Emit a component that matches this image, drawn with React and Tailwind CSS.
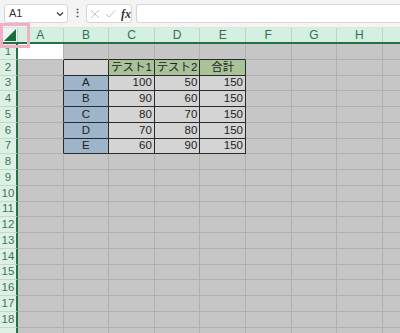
const cols = ['A', 'B', 'C', 'D', 'E', 'F', 'G', 'H'];
const rows = Array.from({ length: 19 }, (_, i) => i + 1);

const data = {
  2: ['', 'テスト1', 'テスト2', '合計'],
  3: ['A', '100', '50', '150'],
  4: ['B', '90', '60', '150'],
  5: ['C', '80', '70', '150'],
  6: ['D', '70', '80', '150'],
  7: ['E', '60', '90', '150'],
};

// table occupies B2:E7 -> col index 1..4, rows 2..7
const inTable = (r, c) => r >= 2 && r <= 7 && c >= 1 && c <= 4;

function Cell({ r, c }) {
  const table = inTable(r, c);
  const rightBlack = table || inTable(r, c + 1);
  const bottomBlack = table || inTable(r + 1, c);
  let bg = 'bg-[#c6c6c6]';
  let text = '';
  let align = 'justify-end pr-[2px]';
  if (r === 1 && c === 0) bg = 'bg-white';
  if (table) {
    text = data[r][c - 1];
    if (r === 2) {
      bg = c === 1 ? 'bg-[#d4d4d4]' : 'bg-[#a9c29a]';
      align = 'justify-center';
    } else if (c === 1) {
      bg = 'bg-[#9db4c9]';
      align = 'justify-center';
    } else {
      bg = 'bg-[#d4d4d4]';
    }
  }
  return (
    <div
      className={`flex h-full w-[45.6px] shrink-0 items-center border-b border-r text-[11.5px] text-[#222] ${bg} ${align} ${
        rightBlack ? 'border-r-[#2a2a2a]' : 'border-r-[#b0b0b0]'
      } ${bottomBlack ? 'border-b-[#2a2a2a]' : 'border-b-[#b0b0b0]'}`}
    >
      {text}
    </div>
  );
}

export default function App() {
  return (
    <div
      className="relative h-[333px] w-[400px] overflow-hidden bg-[#c6c6c6]"
      style={{ fontFamily: '"Liberation Sans", "Noto Sans CJK JP", sans-serif' }}
    >
      {/* formula bar */}
      <div className="flex h-[28px] items-center gap-[4px] border-b border-[#e2e2e2] bg-[#f4f4f4] pl-[4px]">
        <div className="flex h-[19px] w-[64px] items-center justify-between rounded-[3px] border border-[#d6d6d6] bg-white pl-[4px] pr-[3px] text-[11px] text-[#333]">
          <span>A1</span>
          <svg width="8" height="8" viewBox="0 0 8 8">
            <path d="M1 2.5 L4 5.5 L7 2.5" stroke="#333" strokeWidth="1.2" fill="none" />
          </svg>
        </div>
        <span className="w-[10px] text-center text-[11px] font-bold leading-none text-[#444]">⋮</span>
        <div className="flex h-[19px] w-[46px] items-center gap-[5px] rounded-[3px] border border-[#d6d6d6] bg-white pl-[3px]">
          <svg width="10" height="10" viewBox="0 0 10 10">
            <path d="M1 1 L9 9 M9 1 L1 9" stroke="#c4c4c4" strokeWidth="1" />
          </svg>
          <svg width="11" height="10" viewBox="0 0 11 10">
            <path d="M1 5 L4 8 L10 1.5" stroke="#c4c4c4" strokeWidth="1" fill="none" />
          </svg>
          <span className="font-['Liberation_Serif',serif] text-[12px] font-bold italic leading-none text-[#333]">fx</span>
        </div>
        <div className="h-[19px] flex-1 rounded-l-[3px] border border-r-0 border-[#d6d6d6] bg-white" />
      </div>

      {/* column headers */}
      <div className="flex h-[16px] border-b-2 border-[#217346] bg-[#d3f0e0]">
        <div className="relative h-full w-[18px] shrink-0 border-r border-[#b8d8c4] bg-[#e9f5ee]">
          <svg className="absolute bottom-[1px] right-[1px]" width="12" height="12" viewBox="0 0 12 12">
            <path d="M12 0 L12 12 L0 12 Z" fill="#1e6b3f" />
          </svg>
        </div>
        {cols.map((c) => (
          <div
            key={c}
            className="flex h-full w-[45.6px] shrink-0 items-center justify-center border-r border-[#b8d8c4] text-[12px] text-[#3c6e52]"
          >
            {c}
          </div>
        ))}
        <div className="flex-1" />
      </div>

      {/* grid */}
      <div>
        {rows.map((r) => (
          <div key={r} className="flex h-[15.78px]">
            <div className="flex h-full w-[18px] shrink-0 items-center justify-center border-r-2 border-b border-r-[#217346] border-b-[#c0dcc8] bg-[#dcf1e4] text-[11.5px] text-[#3f7458]">
              {r < 19 ? r : ''}
            </div>
            {cols.map((c, i) => (
              <Cell key={c} r={r} c={i} />
            ))}
            <div className="h-full flex-1 border-b border-[#b0b0b0]" />
          </div>
        ))}
      </div>

      {/* annotation box */}
      <div className="absolute left-0 top-[23px] h-[25px] w-[30px] border-[3px] border-[#f2b0c6]" />
    </div>
  );
}
